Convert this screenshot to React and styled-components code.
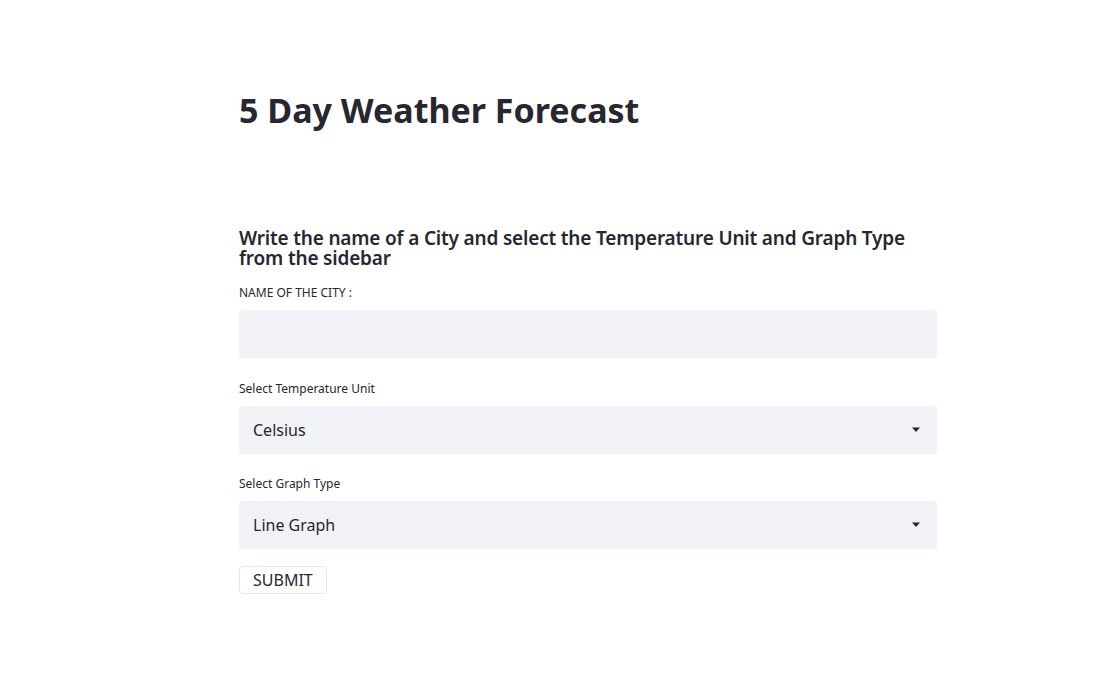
import React, { useState } from 'react';
import styled, { createGlobalStyle } from 'styled-components';

const GlobalStyle = createGlobalStyle`
  html, body {
    margin: 0;
    padding: 0;
    background: #ffffff;
  }
  body {
    font-family: "Noto Sans", "Open Sans", sans-serif;
    color: #262730;
  }
`;

const Page = styled.div`
  width: 100%;
  min-height: 673px;
  box-sizing: border-box;
  padding-left: 239px;
  display: flex;
  justify-content: flex-start;
`;

const Main = styled.div`
  width: 698px;
  padding-top: 84px;
  display: flex;
  flex-direction: column;
`;

const Title = styled.h1`
  margin: 0;
  font-family: "Noto Sans", sans-serif;
  font-size: 34px;
  line-height: 52px;
  font-weight: 700;
  color: #262730;
`;

const Subheader = styled.h3`
  margin: 92px 0 0;
  font-family: "Noto Sans", sans-serif;
  font-size: 19px;
  line-height: 20px;
  font-weight: 600;
  letter-spacing: -0.18px;
  color: #262730;
`;

const Field = styled.div`
  display: flex;
  flex-direction: column;
  margin-top: ${props => props.top || 0}px;
`;

const Label = styled.label`
  font-size: 12px;
  line-height: 16px;
  color: #262730;
  margin-bottom: 9px;
`;

const TextInput = styled.input`
  height: 48px;
  box-sizing: border-box;
  border: none;
  outline: none;
  border-radius: 4px;
  background: #f0f2f6;
  padding: 0 14px;
  font-family: inherit;
  font-size: 16px;
  color: #262730;
`;

const SelectBox = styled.div`
  height: 48px;
  box-sizing: border-box;
  border-radius: 4px;
  background: #f0f2f6;
  padding: 0 14px;
  display: flex;
  align-items: center;
  justify-content: space-between;
  font-size: 16px;
  color: #262730;
  cursor: pointer;
`;

const Caret = styled.svg`
  width: 10px;
  height: 6px;
  margin-right: 2px;
  fill: #262730;
`;

const SubmitButton = styled.button`
  align-self: flex-start;
  margin-top: 17px;
  height: 28px;
  padding: 0 13px;
  background: #ffffff;
  border: 1px solid #e3e6ed;
  border-radius: 4px;
  font-family: inherit;
  font-size: 16px;
  color: #262730;
  cursor: pointer;
`;

const Select = ({ value }) => (
  <SelectBox>
    <span>{value}</span>
    <Caret viewBox="0 0 10 6">
      <path d="M1 0.5 H9 L5 5 Z" />
    </Caret>
  </SelectBox>
);

export default function App() {
  const [city, setCity] = useState('');
  return (
    <Page>
      <GlobalStyle />
      <Main>
        <Title>5 Day Weather Forecast</Title>
        <Subheader>
          Write the name of a City and select the Temperature Unit and Graph Type from the sidebar
        </Subheader>
        <Field top={17}>
          <Label>NAME OF THE CITY :</Label>
          <TextInput value={city} onChange={e => setCity(e.target.value)} />
        </Field>
        <Field top={23}>
          <Label>Select Temperature Unit</Label>
          <Select value="Celsius" />
        </Field>
        <Field top={22}>
          <Label>Select Graph Type</Label>
          <Select value="Line Graph" />
        </Field>
        <SubmitButton>SUBMIT</SubmitButton>
      </Main>
    </Page>
  );
}
